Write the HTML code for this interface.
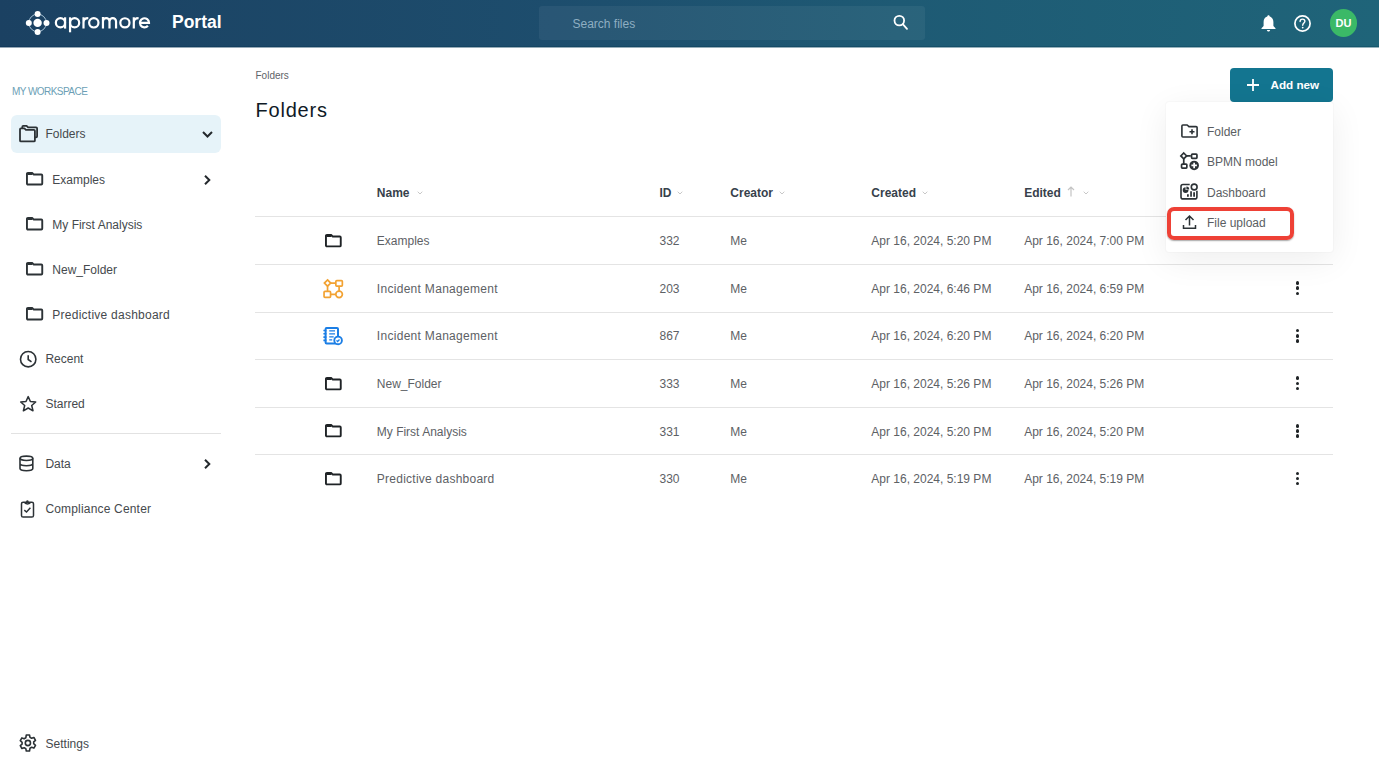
<!DOCTYPE html>
<html><head><meta charset="utf-8">
<style>
*{margin:0;padding:0;box-sizing:border-box}
html,body{width:1379px;height:781px;overflow:hidden;background:#fff;font-family:"Liberation Sans",sans-serif;}
.a{position:absolute;white-space:nowrap;line-height:12px;font-size:12px}
#hdr{position:absolute;left:0;top:0;width:1379px;height:47px;background:linear-gradient(90deg,#1b4162 0%,#1d4d6d 40%,#1e5a74 65%,#1f6479 100%);}
#hdrb{position:absolute;left:0;top:46px;width:1379px;height:1px;background:linear-gradient(90deg,#133a5c,#16586e)}
#hdrc{position:absolute;left:0;top:47px;width:1379px;height:1px;background:linear-gradient(90deg,rgba(22,60,92,0.45),rgba(22,88,108,0.45))}
#search{position:absolute;left:539px;top:6px;width:386px;height:34px;border-radius:3px;background:rgba(255,255,255,0.055)}
.side{color:#45494d}
.row{color:#5d6165}
.th{color:#37414b;font-weight:700}
.line{position:absolute;left:255px;width:1078px;height:1px;background:#e4e4e4}
svg{position:absolute;overflow:visible}
</style></head><body>
<div id="hdr">
  <!-- logo -->
  <svg style="left:26px;top:11px" width="24" height="24" viewBox="0 0 24 24">
    <circle cx="11.6" cy="11.9" r="8.8" fill="none" stroke="#b9d3e4" stroke-width="0.9"/>
    <circle cx="11.6" cy="11.9" r="4.2" fill="#fff"/>
    <circle cx="11.6" cy="2.9" r="3" fill="#fff"/>
    <circle cx="11.6" cy="21" r="3" fill="#fff"/>
    <circle cx="2.8" cy="11.9" r="3" fill="#fff"/>
    <circle cx="20.5" cy="11.9" r="3" fill="#fff"/>
  </svg>
  <svg style="left:0;top:0" width="160" height="40" viewBox="0 0 160 40"><g fill="none" stroke="#fff" stroke-width="2.2">
    <circle cx="60.45" cy="22.8" r="4.6"/><path d="M65.1 17.3V28.6"/>
    <circle cx="74.6" cy="22.8" r="4.6"/><path d="M70.05 17.3V32.3"/>
    <path d="M83.5 17.3V28.6M83.5 22.6Q83.5 18.2 88.3 18.2"/>
    <circle cx="93.8" cy="22.85" r="4.67"/>
    <path d="M102.95 17.1V28.6M102.95 21.45A3.275 3.275 0 0 1 109.5 21.45V28.6M109.5 21.45A3.275 3.275 0 0 1 116.05 21.45V28.6"/>
    <circle cx="124.9" cy="22.85" r="4.6"/>
    <path d="M133.8 17.3V28.6M133.8 22.6Q133.8 18.2 138.6 18.2"/>
    <path d="M139.9 22.85H149A4.55 4.55 0 1 0 147.9 25.8"/>
  </g></svg>
  <div class="a" style="left:172px;top:13.5px;font-size:17.5px;line-height:17.5px;color:#fff;font-weight:700">Portal</div>
  <div id="search"></div>
  <div class="a" style="left:572.5px;top:17.8px;color:#8eaec2">Search files</div>
  <svg style="left:892px;top:14px" width="18" height="18" viewBox="0 0 18 18">
    <circle cx="7.3" cy="6.6" r="4.8" fill="none" stroke="#fff" stroke-width="1.8"/>
    <line x1="10.8" y1="10.2" x2="15" y2="14.8" stroke="#fff" stroke-width="1.8" stroke-linecap="round"/>
  </svg>
  <!-- bell -->
  <svg style="left:1261px;top:14.5px" width="15" height="17" viewBox="0 0 15 17">
    <path d="M7.5 0.3c0.8 0 1.2 0.6 1.2 1.3 2.5 0.6 3.7 2.7 3.7 5.3v4.2l2.1 2.1v0.9H0.5v-0.9l2.1-2.1V6.9c0-2.6 1.2-4.7 3.7-5.3 0-0.7 0.4-1.3 1.2-1.3z" fill="#fff"/>
    <path d="M5.9 15h3.2c0 0.9-0.7 1.5-1.6 1.5S5.9 15.9 5.9 15z" fill="#fff"/>
  </svg>
  <!-- help -->
  <svg style="left:1294px;top:14.5px" width="17" height="17" viewBox="0 0 17 17">
    <circle cx="8.5" cy="8.5" r="7.6" fill="none" stroke="#fff" stroke-width="1.7"/>
    <path d="M6.1 6.6c0-1.5 1.1-2.5 2.4-2.5s2.4 0.9 2.4 2.2c0 1.6-2.2 1.9-2.2 3.9" fill="none" stroke="#fff" stroke-width="1.4" stroke-linecap="round"/>
    <circle cx="8.7" cy="12.6" r="0.9" fill="#fff"/>
  </svg>
  <div style="position:absolute;left:1329.5px;top:9px;width:27.5px;height:27.5px;border-radius:50%;background:#3bb967"></div>
  <div class="a" style="left:1335.5px;top:17.5px;font-size:11px;line-height:11px;color:#fff;font-weight:700">DU</div>
</div>

<div id="hdrb"></div><div id="hdrc"></div>
<!-- SIDEBAR -->
<div class="a" style="left:12px;top:87px;font-size:10px;line-height:10px;color:#6c9fb6;letter-spacing:-0.55px">MY WORKSPACE</div>
<div style="position:absolute;left:11px;top:115px;width:210px;height:38px;border-radius:6px;background:#e6f3f9"></div>
<svg style="left:19px;top:125px" width="20" height="17" viewBox="0 0 20 17">
  <path d="M3.3 3.3V1.9c0-0.6 0.4-1 1-1h3.3l1.5 1.5h8c0.6 0 1 0.4 1 1v7.9c0 0.6-0.4 1-1 1h-1.2" fill="none" stroke="#2c3236" stroke-width="1.8" stroke-linejoin="round"/>
  <path d="M1 4.3c0-0.6 0.4-1 1-1h3.4l1.5 1.5h8c0.6 0 1 0.4 1 1v9.6c0 0.6-0.4 1-1 1H2c-0.6 0-1-0.4-1-1z" fill="none" stroke="#2c3236" stroke-width="1.8" stroke-linejoin="round"/>
</svg>
<div class="a side" style="left:45.5px;top:128.3px">Folders</div>
<svg style="left:202px;top:131px" width="11" height="7" viewBox="0 0 11 7"><path d="M1 1l4.5 4.5L10 1" fill="none" stroke="#24292d" stroke-width="2"/></svg>

<svg style="left:26px;top:172.0px" width="20" height="16" viewBox="0 0 20 16"><path d="M0.95 1.9c0-0.5 0.4-0.95 0.95-0.95h4.3l1.6 1.6h7.50c0.5 0 0.95 0.4 0.95 0.95V11.60c0 0.5-0.4 0.95-0.95 0.95H1.9c-0.5 0-0.95-0.4-0.95-0.95z" fill="none" stroke="#2c3236" stroke-width="1.9" stroke-linejoin="round"/><path d="M1.5 2.2h5" stroke="#2c3236" stroke-width="1.6"/></svg><div class="a side" style="left:52.3px;top:173.64px;letter-spacing:0px">Examples</div><svg style="left:26px;top:217.0px" width="20" height="16" viewBox="0 0 20 16"><path d="M0.95 1.9c0-0.5 0.4-0.95 0.95-0.95h4.3l1.6 1.6h7.50c0.5 0 0.95 0.4 0.95 0.95V11.60c0 0.5-0.4 0.95-0.95 0.95H1.9c-0.5 0-0.95-0.4-0.95-0.95z" fill="none" stroke="#2c3236" stroke-width="1.9" stroke-linejoin="round"/><path d="M1.5 2.2h5" stroke="#2c3236" stroke-width="1.6"/></svg><div class="a side" style="left:52.3px;top:218.64px;letter-spacing:0px">My First Analysis</div><svg style="left:26px;top:262.0px" width="20" height="16" viewBox="0 0 20 16"><path d="M0.95 1.9c0-0.5 0.4-0.95 0.95-0.95h4.3l1.6 1.6h7.50c0.5 0 0.95 0.4 0.95 0.95V11.60c0 0.5-0.4 0.95-0.95 0.95H1.9c-0.5 0-0.95-0.4-0.95-0.95z" fill="none" stroke="#2c3236" stroke-width="1.9" stroke-linejoin="round"/><path d="M1.5 2.2h5" stroke="#2c3236" stroke-width="1.6"/></svg><div class="a side" style="left:52.3px;top:263.64px;letter-spacing:0px">New_Folder</div><svg style="left:26px;top:307.0px" width="20" height="16" viewBox="0 0 20 16"><path d="M0.95 1.9c0-0.5 0.4-0.95 0.95-0.95h4.3l1.6 1.6h7.50c0.5 0 0.95 0.4 0.95 0.95V11.60c0 0.5-0.4 0.95-0.95 0.95H1.9c-0.5 0-0.95-0.4-0.95-0.95z" fill="none" stroke="#2c3236" stroke-width="1.9" stroke-linejoin="round"/><path d="M1.5 2.2h5" stroke="#2c3236" stroke-width="1.6"/></svg><div class="a side" style="left:52.3px;top:308.64px;letter-spacing:0.25px">Predictive dashboard</div><svg style="left:204px;top:175px" width="7" height="10" viewBox="0 0 7 10"><path d="M1 0.8l4.3 4.2L1 9.2" fill="none" stroke="#24292d" stroke-width="2"/></svg>

<div class="a side" style="left:45.4px;top:353.4px">Recent</div>
<svg style="left:19px;top:350px" width="18" height="18" viewBox="0 0 18 18">
  <circle cx="9.2" cy="9.2" r="7.7" fill="none" stroke="#2c3236" stroke-width="1.6"/>
  <path d="M9.2 5.2v4.3l3.3 2.4" fill="none" stroke="#2c3236" stroke-width="1.6"/>
</svg>
<div class="a side" style="left:45.4px;top:398.4px">Starred</div>
<svg style="left:19px;top:395px" width="18" height="18" viewBox="0 0 18 18">
  <path d="M9.2 1.6l2.2 4.9 5.3 0.5-4 3.5 1.3 5.3-4.8-2.8-4.8 2.8 1.3-5.3-4-3.5 5.3-0.5z" fill="none" stroke="#2c3236" stroke-width="1.5" stroke-linejoin="round"/>
</svg>
<div style="position:absolute;left:11px;top:433px;width:210px;height:1px;background:#e2e2e2"></div>
<div class="a side" style="left:45.4px;top:457.8px">Data</div>
<svg style="left:18px;top:455px" width="17" height="17" viewBox="0 0 17 17">
  <ellipse cx="8.4" cy="3.3" rx="6.4" ry="2.2" fill="none" stroke="#2c3236" stroke-width="1.6"/>
  <path d="M2 3.3v10.3c0 1.2 2.9 2.2 6.4 2.2s6.4-1 6.4-2.2V3.3M2 8.6c0 1.2 2.9 2.2 6.4 2.2s6.4-1 6.4-2.2" fill="none" stroke="#2c3236" stroke-width="1.6"/>
</svg>
<svg style="left:204px;top:458.5px" width="7" height="10" viewBox="0 0 7 10"><path d="M1 0.8l4.3 4.2L1 9.2" fill="none" stroke="#24292d" stroke-width="2"/></svg>
<div class="a side" style="left:45.4px;top:502.5px;letter-spacing:0.18px">Compliance Center</div>
<svg style="left:20px;top:500px" width="15" height="18" viewBox="0 0 15 18">
  <rect x="1.5" y="2.2" width="12" height="14.8" rx="1.6" fill="none" stroke="#2c3236" stroke-width="1.5"/>
  <path d="M4.6 2.6c0.3 0.9 1.3 1.3 2.9 1.3s2.6-0.4 2.9-1.3" fill="none" stroke="#2c3236" stroke-width="1.5"/>
  <circle cx="7.4" cy="1.5" r="1.2" fill="#2c3236"/>
  <path d="M4.3 10.2l2.2 1.8 3.9-4.2" fill="none" stroke="#2c3236" stroke-width="1.5"/>
</svg>
<div class="a side" style="left:45.6px;top:737.6px">Settings</div>
<svg style="left:19px;top:734px" width="18" height="18" viewBox="0 0 18 18">
  <path d="M7.3 1h3.2l0.5 2.4 1.6 0.9 2.3-0.8 1.6 2.8-1.8 1.6v1.8l1.8 1.6-1.6 2.8-2.3-0.8-1.6 0.9L10.5 17H7.3l-0.5-2.4-1.6-0.9-2.3 0.8-1.6-2.8 1.8-1.6V8.3L1.3 6.7l1.6-2.8 2.3 0.8 1.6-0.9z" fill="none" stroke="#2c3236" stroke-width="1.6" stroke-linejoin="round"/>
  <circle cx="8.9" cy="9" r="2.6" fill="none" stroke="#2c3236" stroke-width="1.6"/>
</svg>

<!-- MAIN -->
<div class="a" style="left:255.5px;top:70.5px;font-size:10px;line-height:10px;color:#5f6368">Folders</div>
<div class="a" style="left:255.5px;top:100px;font-size:20px;line-height:20px;color:#0f1a26;letter-spacing:0.8px">Folders</div>

<div class="a th" style="left:376.8px;top:186.64px">Name</div><div class="a th" style="left:659.5px;top:186.64px">ID</div><div class="a th" style="left:730.3px;top:186.64px">Creator</div><div class="a th" style="left:871.3px;top:186.64px">Created</div><div class="a th" style="left:1024.2px;top:186.64px">Edited</div><svg style="left:416.5px;top:190.5px" width="6" height="4" viewBox="0 0 6 4"><path d="M0.7 0.7L3 3l2.3-2.3" fill="none" stroke="#c8c8c8" stroke-width="1"/></svg><svg style="left:677px;top:190.5px" width="6" height="4" viewBox="0 0 6 4"><path d="M0.7 0.7L3 3l2.3-2.3" fill="none" stroke="#c8c8c8" stroke-width="1"/></svg><svg style="left:779px;top:190.5px" width="6" height="4" viewBox="0 0 6 4"><path d="M0.7 0.7L3 3l2.3-2.3" fill="none" stroke="#c8c8c8" stroke-width="1"/></svg><svg style="left:921.5px;top:190.5px" width="6" height="4" viewBox="0 0 6 4"><path d="M0.7 0.7L3 3l2.3-2.3" fill="none" stroke="#c8c8c8" stroke-width="1"/></svg><svg style="left:1082.5px;top:190.5px" width="6" height="4" viewBox="0 0 6 4"><path d="M0.7 0.7L3 3l2.3-2.3" fill="none" stroke="#c8c8c8" stroke-width="1"/></svg><svg style="left:1067px;top:186px" width="8" height="11" viewBox="0 0 8 11"><path d="M4 10.5V1M1 4l3-3 3 3" fill="none" stroke="#c4c4c4" stroke-width="1.2"/></svg><div class="line" style="top:216px"></div><div class="line" style="top:264px"></div><div class="line" style="top:312px"></div><div class="line" style="top:359px"></div><div class="line" style="top:407px"></div><div class="line" style="top:454px"></div><div class="a row" style="left:376.8px;top:235.24px"><span style="letter-spacing:0px">Examples</span></div><div class="a row" style="left:659.5px;top:235.24px">332</div><div class="a row" style="left:730.3px;top:235.24px">Me</div><div class="a row" style="left:871.3px;top:235.24px">Apr 16, 2024, 5:20 PM</div><div class="a row" style="left:1024.2px;top:235.24px">Apr 16, 2024, 7:00 PM</div><svg style="left:324.8px;top:233.8px" width="20" height="16" viewBox="0 0 20 16"><path d="M0.95 1.9c0-0.5 0.4-0.95 0.95-0.95h4.3l1.6 1.6h7.00c0.5 0 0.95 0.4 0.95 0.95V11.40c0 0.5-0.4 0.95-0.95 0.95H1.9c-0.5 0-0.95-0.4-0.95-0.95z" fill="none" stroke="#1f2326" stroke-width="1.9" stroke-linejoin="round"/><path d="M1.5 2.2h5" stroke="#1f2326" stroke-width="1.6"/></svg><div class="a row" style="left:376.8px;top:282.84px"><span style="letter-spacing:0.3px">Incident Management</span></div><div class="a row" style="left:659.5px;top:282.84px">203</div><div class="a row" style="left:730.3px;top:282.84px">Me</div><div class="a row" style="left:871.3px;top:282.84px">Apr 16, 2024, 6:46 PM</div><div class="a row" style="left:1024.2px;top:282.84px">Apr 16, 2024, 6:59 PM</div><svg style="left:315px;top:270px" width="35" height="35" viewBox="315 270 35 35"><g fill="none" stroke="#f2a232" stroke-width="1.7"><path d="M327.55 279.9l3.15 3.15-3.15 3.15-3.15-3.15z"/><rect x="335.85" y="280.55" width="6.5" height="5.6" rx="0.9"/><rect x="324.05" y="291.35" width="6.5" height="6" rx="0.9"/><circle cx="339.1" cy="294.35" r="3.3"/><path d="M330.7 283.05h5.2M327.55 286.2v5.2M339.1 286.1v4.9M330.5 294.35h5.3"/></g></svg><div style="position:absolute;left:1295.6px;top:281.20px;width:3.6px;height:3.6px;border-radius:50%;background:#1f2326"></div><div style="position:absolute;left:1295.6px;top:286.35px;width:3.6px;height:3.6px;border-radius:50%;background:#1f2326"></div><div style="position:absolute;left:1295.6px;top:291.50px;width:3.6px;height:3.6px;border-radius:50%;background:#1f2326"></div><div class="a row" style="left:376.8px;top:330.44px"><span style="letter-spacing:0.3px">Incident Management</span></div><div class="a row" style="left:659.5px;top:330.44px">867</div><div class="a row" style="left:730.3px;top:330.44px">Me</div><div class="a row" style="left:871.3px;top:330.44px">Apr 16, 2024, 6:20 PM</div><div class="a row" style="left:1024.2px;top:330.44px">Apr 16, 2024, 6:20 PM</div><svg style="left:315px;top:320px" width="35" height="30" viewBox="315 320 35 30"><g fill="none" stroke="#1b7ee5"><rect x="325.6" y="327.9" width="12.4" height="15.7" rx="1" stroke-width="2"/><path d="M323.4 330.5h3M323.4 333.8h3M323.4 337.1h3M323.4 340.4h3" stroke-width="1.6"/><path d="M329.2 330.9h5.8M329.2 333.9h5.8M329.2 336.9h4.5M329.2 339.8h3" stroke-width="1.3"/></g><circle cx="338.1" cy="340.4" r="3.8" fill="#fff" stroke="#1b7ee5" stroke-width="1.9"/><path d="M336.5 340.4l1.1 1.1 1.9-2" fill="none" stroke="#1b7ee5" stroke-width="1.3"/></svg><div style="position:absolute;left:1295.6px;top:328.80px;width:3.6px;height:3.6px;border-radius:50%;background:#1f2326"></div><div style="position:absolute;left:1295.6px;top:333.95px;width:3.6px;height:3.6px;border-radius:50%;background:#1f2326"></div><div style="position:absolute;left:1295.6px;top:339.10px;width:3.6px;height:3.6px;border-radius:50%;background:#1f2326"></div><div class="a row" style="left:376.8px;top:378.04px"><span style="letter-spacing:0px">New_Folder</span></div><div class="a row" style="left:659.5px;top:378.04px">333</div><div class="a row" style="left:730.3px;top:378.04px">Me</div><div class="a row" style="left:871.3px;top:378.04px">Apr 16, 2024, 5:26 PM</div><div class="a row" style="left:1024.2px;top:378.04px">Apr 16, 2024, 5:26 PM</div><svg style="left:324.8px;top:376.6px" width="20" height="16" viewBox="0 0 20 16"><path d="M0.95 1.9c0-0.5 0.4-0.95 0.95-0.95h4.3l1.6 1.6h7.00c0.5 0 0.95 0.4 0.95 0.95V11.40c0 0.5-0.4 0.95-0.95 0.95H1.9c-0.5 0-0.95-0.4-0.95-0.95z" fill="none" stroke="#1f2326" stroke-width="1.9" stroke-linejoin="round"/><path d="M1.5 2.2h5" stroke="#1f2326" stroke-width="1.6"/></svg><div style="position:absolute;left:1295.6px;top:376.40px;width:3.6px;height:3.6px;border-radius:50%;background:#1f2326"></div><div style="position:absolute;left:1295.6px;top:381.55px;width:3.6px;height:3.6px;border-radius:50%;background:#1f2326"></div><div style="position:absolute;left:1295.6px;top:386.70px;width:3.6px;height:3.6px;border-radius:50%;background:#1f2326"></div><div class="a row" style="left:376.8px;top:425.64px"><span style="letter-spacing:0px">My First Analysis</span></div><div class="a row" style="left:659.5px;top:425.64px">331</div><div class="a row" style="left:730.3px;top:425.64px">Me</div><div class="a row" style="left:871.3px;top:425.64px">Apr 16, 2024, 5:20 PM</div><div class="a row" style="left:1024.2px;top:425.64px">Apr 16, 2024, 5:20 PM</div><svg style="left:324.8px;top:424.2px" width="20" height="16" viewBox="0 0 20 16"><path d="M0.95 1.9c0-0.5 0.4-0.95 0.95-0.95h4.3l1.6 1.6h7.00c0.5 0 0.95 0.4 0.95 0.95V11.40c0 0.5-0.4 0.95-0.95 0.95H1.9c-0.5 0-0.95-0.4-0.95-0.95z" fill="none" stroke="#1f2326" stroke-width="1.9" stroke-linejoin="round"/><path d="M1.5 2.2h5" stroke="#1f2326" stroke-width="1.6"/></svg><div style="position:absolute;left:1295.6px;top:424.00px;width:3.6px;height:3.6px;border-radius:50%;background:#1f2326"></div><div style="position:absolute;left:1295.6px;top:429.15px;width:3.6px;height:3.6px;border-radius:50%;background:#1f2326"></div><div style="position:absolute;left:1295.6px;top:434.30px;width:3.6px;height:3.6px;border-radius:50%;background:#1f2326"></div><div class="a row" style="left:376.8px;top:473.24px"><span style="letter-spacing:0.25px">Predictive dashboard</span></div><div class="a row" style="left:659.5px;top:473.24px">330</div><div class="a row" style="left:730.3px;top:473.24px">Me</div><div class="a row" style="left:871.3px;top:473.24px">Apr 16, 2024, 5:19 PM</div><div class="a row" style="left:1024.2px;top:473.24px">Apr 16, 2024, 5:19 PM</div><svg style="left:324.8px;top:471.8px" width="20" height="16" viewBox="0 0 20 16"><path d="M0.95 1.9c0-0.5 0.4-0.95 0.95-0.95h4.3l1.6 1.6h7.00c0.5 0 0.95 0.4 0.95 0.95V11.40c0 0.5-0.4 0.95-0.95 0.95H1.9c-0.5 0-0.95-0.4-0.95-0.95z" fill="none" stroke="#1f2326" stroke-width="1.9" stroke-linejoin="round"/><path d="M1.5 2.2h5" stroke="#1f2326" stroke-width="1.6"/></svg><div style="position:absolute;left:1295.6px;top:471.60px;width:3.6px;height:3.6px;border-radius:50%;background:#1f2326"></div><div style="position:absolute;left:1295.6px;top:476.75px;width:3.6px;height:3.6px;border-radius:50%;background:#1f2326"></div><div style="position:absolute;left:1295.6px;top:481.90px;width:3.6px;height:3.6px;border-radius:50%;background:#1f2326"></div>

<!-- Add new -->
<div style="position:absolute;left:1229.5px;top:68px;width:103.5px;height:33.5px;border-radius:4px;background:#137590"></div>
<svg style="left:1246px;top:78px" width="14" height="14" viewBox="0 0 14 14"><path d="M7 1v12M1 7h12" stroke="#fff" stroke-width="1.8"/></svg>
<div class="a" style="left:1270.5px;top:79px;color:#fff;font-weight:700;font-size:11.7px">Add new</div>

<div style="position:absolute;left:1165.5px;top:101.5px;width:167.5px;height:150px;background:#fff;border-radius:3px;box-shadow:0 8px 34px rgba(0,0,0,0.07),0 0 2px rgba(0,0,0,0.07)"></div><div class="a" style="left:1207px;top:125.74px;color:#5a5e62">Folder</div><div class="a" style="left:1207px;top:156.14px;color:#5a5e62">BPMN model</div><div class="a" style="left:1207px;top:186.54px;color:#5a5e62">Dashboard</div><div class="a" style="left:1207px;top:216.94px;color:#5a5e62">File upload</div><svg style="left:1181px;top:124px" width="17" height="14" viewBox="0 0 17 14"><path d="M0.9 2c0-0.6 0.4-1 1-1h4.3l1.7 1.6h7.2c0.6 0 1 0.4 1 1V12c0 0.6-0.4 1-1 1H1.9c-0.6 0-1-0.4-1-1z" fill="none" stroke="#2c3236" stroke-width="1.6" stroke-linejoin="round"/><path d="M11 5.3v5M8.5 7.8h5" stroke="#2c3236" stroke-width="1.6"/></svg><svg style="left:1176px;top:148px" width="26" height="26" viewBox="1176 148 26 26"><g fill="none" stroke="#2c3236" stroke-width="1.7"><path d="M1183.75 153l2.9 2.9-2.9 2.9-2.9-2.9z"/><rect x="1191.55" y="154.15" width="5.4" height="4.2" rx="0.8"/><rect x="1181.55" y="164.05" width="5.3" height="4.1" rx="0.8"/><path d="M1186.6 155.9h4.2M1183.75 158.8v5.2"/></g><circle cx="1194.15" cy="165.45" r="4.8" fill="#2c3236"/><path d="M1194.15 162.7v5.5M1191.4 165.45h5.5" stroke="#fff" stroke-width="1.7"/></svg><svg style="left:1176px;top:179px" width="26" height="26" viewBox="1176 179 26 26"><path d="M1189.7 184.5H1183c-1.2 0-2 0.8-2 2v10.4c0 1.2 0.8 2 2 2h11.9c1.2 0 2-0.8 2-2V190.7" fill="none" stroke="#2c3236" stroke-width="1.6"/><circle cx="1194.2" cy="187" r="2.9" fill="none" stroke="#2c3236" stroke-width="1.6"/><path d="M1185.6 187.2a2.9 2.9 0 1 0 2.9 2.9h-2.9z" fill="#2c3236"/><path d="M1186.4 186.6v2.8h2.8a2.8 2.8 0 0 0-2.8-2.8z" fill="#2c3236"/><path d="M1187 194.2h1.8v2.5H1187zM1190.2 191.2h1.7v5.5h-1.7zM1193.2 192.2h1.8v4.5h-1.8z" fill="#2c3236"/></svg><svg style="left:1182px;top:215px" width="15" height="15" viewBox="0 0 15 15"><path d="M7.5 10.5V1.2M3.5 5l4-4 4 4M1.5 10v3.2h12V10" fill="none" stroke="#2c3236" stroke-width="1.5"/></svg><div style="position:absolute;left:1167.4px;top:207px;width:127px;height:33.3px;border:4.5px solid #ee4136;border-radius:7px;box-shadow:0 1px 1.5px rgba(0,0,0,0.35)"></div>
</body></html>
